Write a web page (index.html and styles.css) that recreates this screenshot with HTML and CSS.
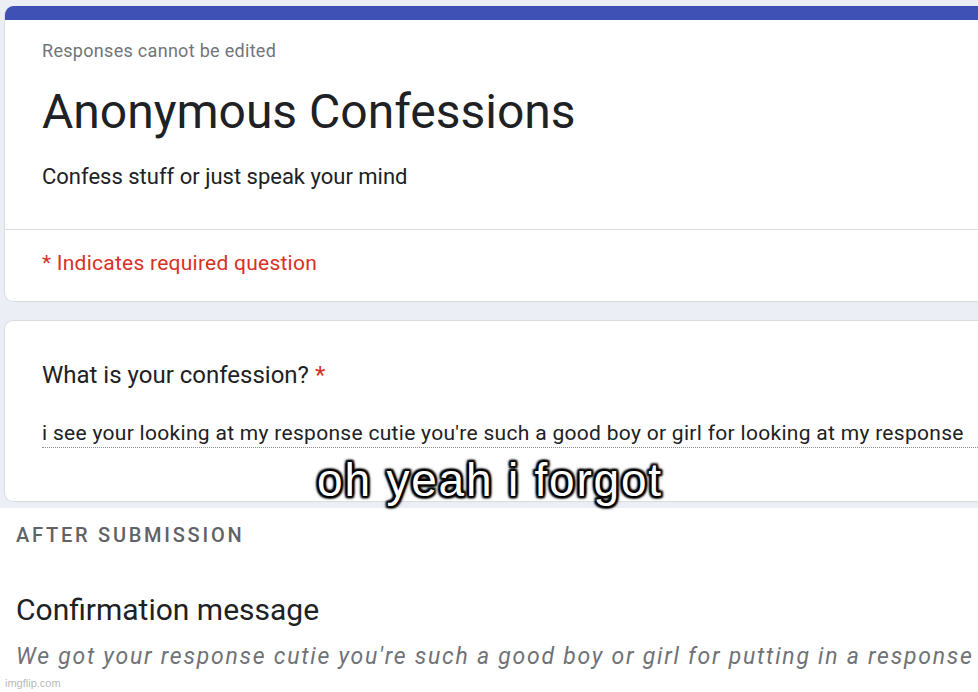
FILE: index.html
```html
<!DOCTYPE html>
<html>
<head>
<meta charset="utf-8">
<link rel="stylesheet" href="styles.css">
</head>
<body>
<div class="page">
  <section class="form-area">
    <div class="card head-card">
      <div class="accent"></div>
      <div class="head-body">
        <div class="note">Responses cannot be edited</div>
        <h1 class="title">Anonymous Confessions</h1>
        <div class="desc">Confess stuff or just speak your mind</div>
      </div>
      <div class="required-row">* Indicates required question</div>
    </div>
    <div class="card q-card">
      <div class="question">What is your confession? <span class="star">*</span></div>
      <div class="answer">i see your looking at my response cutie you're such a good boy or girl for looking at my response</div>
    </div>
  </section>
  <section class="settings">
    <div class="section-label">AFTER SUBMISSION</div>
    <div class="conf-title">Confirmation message</div>
    <div class="conf-text">We got your response cutie you're such a good boy or girl for putting in a response</div>
  </section>
  <div class="meme">oh yeah i forgot</div>
  <div class="watermark">imgflip.com</div>
</div>
</body>
</html>
```

FILE: styles.css
```css
html, body {
  margin: 0;
  padding: 0;
  background: #ffffff;
}
.page {
  position: relative;
  width: 978px;
  height: 692px;
  overflow: hidden;
  font-family: Roboto, "Liberation Sans", Arial, sans-serif;
}
.form-area {
  background: #eceef6;
  padding: 6px 0 6px 4px;
  display: flex;
  flex-direction: column;
  gap: 18px;
}
.card {
  background: #ffffff;
  border: 1px solid #dadce0;
  border-right: none;
  border-radius: 9px 0 0 9px;
  margin-right: -20px;
}
.head-card {
  border-top: none;
  overflow: hidden;
}
.accent {
  height: 14px;
  background: #3f51b5;
  margin-left: -1px;
}
.head-body {
  padding: 20px 0 39px 37px;
  border-bottom: 1px solid #dadce0;
}
.note {
  font-size: 18px;
  line-height: 22px;
  color: #70757a;
  letter-spacing: 0.3px;
}
.title {
  margin: 22px 0 0;
  font-size: 48px;
  line-height: 56px;
  font-weight: 400;
  color: #202124;
}
.desc {
  margin-top: 24px;
  font-size: 22px;
  line-height: 26px;
  color: #202124;
}
.required-row {
  padding: 20px 0 25px 37px;
  font-size: 21px;
  line-height: 26px;
  color: #d93025;
  letter-spacing: 0.25px;
}
.q-card {
  padding: 40px 0 53px 37px;
}
.question {
  font-size: 24px;
  line-height: 28px;
  color: #202124;
}
.star {
  color: #d93025;
}
.answer {
  margin-top: 32px;
  font-size: 21px;
  line-height: 24px;
  color: #202124;
  letter-spacing: 0.3px;
  padding-bottom: 2px;
  border-bottom: 1px dotted #8a8d91;
  white-space: nowrap;
}
.settings {
  padding: 15px 0 0 16px;
}
.section-label {
  font-size: 20px;
  line-height: 24px;
  font-weight: 500;
  letter-spacing: 2.75px;
  color: #5f6368;
}
.conf-title {
  margin-top: 46px;
  font-size: 30px;
  line-height: 34px;
  color: #202124;
}
.conf-text {
  margin-top: 16px;
  font-size: 23px;
  line-height: 28px;
  font-style: italic;
  color: #6f7276;
  letter-spacing: 1.75px;
  white-space: nowrap;
}
.meme {
  position: absolute;
  left: 0;
  right: 0;
  top: 453px;
  text-align: center;
  font-family: "Liberation Sans", Arial, sans-serif;
  font-size: 46px;
  line-height: 54px;
  letter-spacing: 1.8px;
  color: #ffffff;
  padding-left: 2px;
  text-shadow:
    -2px -2px 2px #000, 2px -2px 2px #000, -2px 2px 2px #000, 2px 2px 2px #000,
    0 -2px 2px #000, 0 2px 2px #000, -2px 0 2px #000, 2px 0 2px #000,
    0 0 5px #000;
}
.watermark {
  position: absolute;
  left: 5px;
  top: 676px;
  font-family: "Liberation Sans", Arial, sans-serif;
  font-size: 11px;
  line-height: 14px;
  color: #b9b9b9;
}
```
